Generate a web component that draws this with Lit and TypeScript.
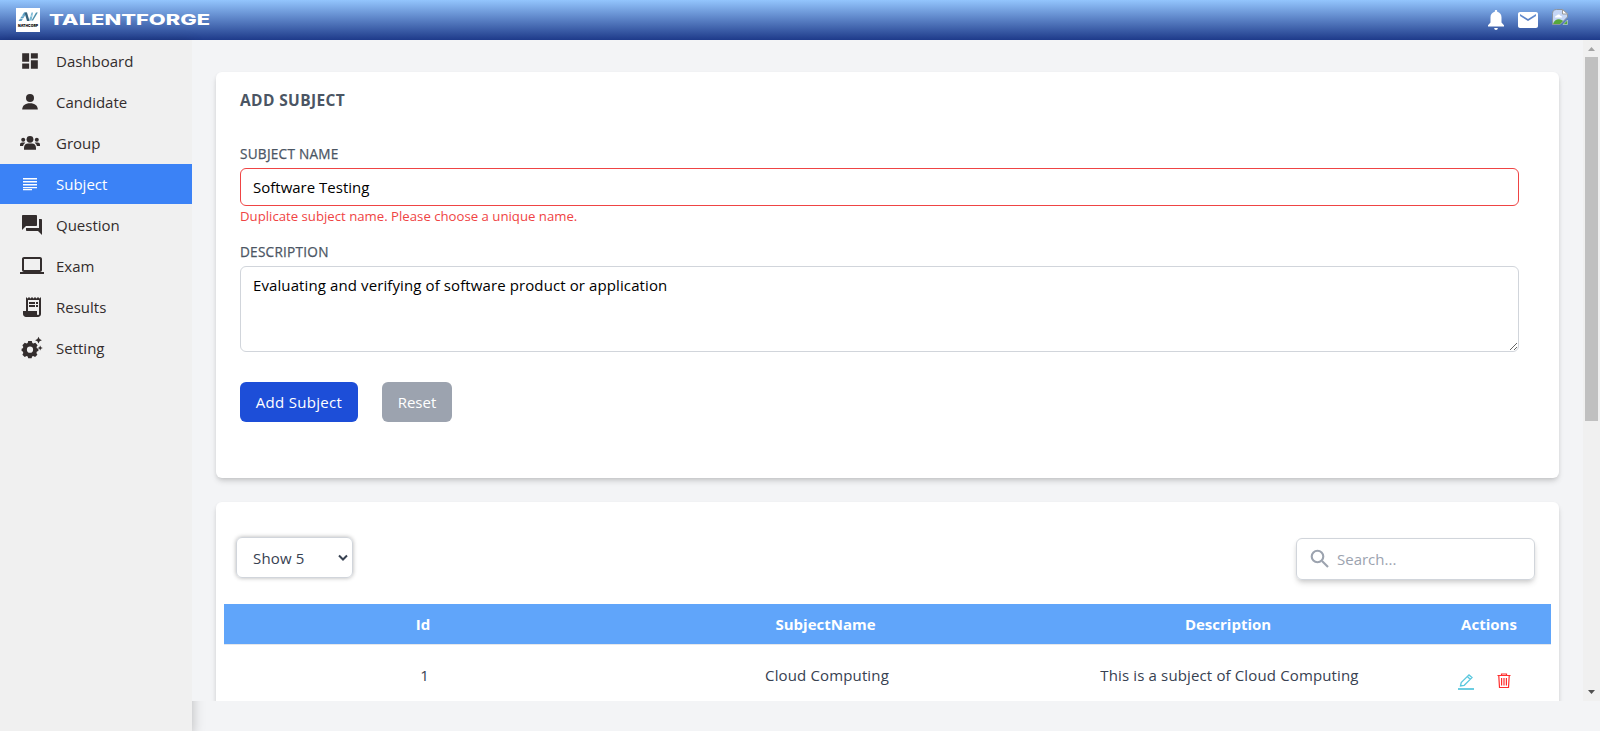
import { LitElement, html, css, svg } from "lit";
import { customElement, property } from "lit/decorators.js";

type NavItem = { id: string; label: string };

const NAV: NavItem[] = [
  { id: "dashboard", label: "Dashboard" },
  { id: "candidate", label: "Candidate" },
  { id: "group", label: "Group" },
  { id: "subject", label: "Subject" },
  { id: "question", label: "Question" },
  { id: "exam", label: "Exam" },
  { id: "results", label: "Results" },
  { id: "setting", label: "Setting" },
];

const ICONS: Record<string, { size: number; box: string; body: unknown }> = {
  dashboard: { size: 20, box: ".5 .5 23 23", body: svg`<path d="M3 13h8V3H3v10zm0 8h8v-6H3v6zm10 0h8V11h-8v10zm0-18v6h8V3h-8z"/>` },
  candidate: { size: 20, box: "0 0 20 20", body: svg`<circle cx="10" cy="6" r="4"/><path d="M2.200 17.500c0-4 3-6.300 7.800-6.300s7.800 2.300 7.800 6.300z"/>` },
  group: { size: 20, box: "0 0 20 20", body: svg`<circle cx="10" cy="6.300" r="3.400"/><circle cx="3.200" cy="6.700" r="2"/><circle cx="16.800" cy="6.700" r="2"/><path d="M4 16.800v-1.800c0-3.200 1.800-4.600 4-4.600h4c2.200 0 4 1.400 4 4.600v1.800zM0 13v-1.200c0-1.500.9-2.300 2.200-2.300h2.200c.3 0 .6.100.9.200-1.200.8-2 1.900-2.200 3.300zM20 13v-1.200c0-1.500-.9-2.300-2.200-2.300h-2.200c-.3 0-.6.100-.9.200 1.200.8 2 1.900 2.200 3.300z"/>` },
  subject: { size: 20, box: "0 0 20 20", body: svg`<path d="M3 4h14v1.600H3zM3 7h14v1.600H3zM3 10h14v1.600H3zM3 12.900h14v1.300H3zM3 15h9v1.300H3z"/>` },
  question: { size: 24, box: "0 0 24 24", body: svg`<path d="M21 6h-2v9H6v2c0 .55.45 1 1 1h11l4 4V7c0-.55-.45-1-1-1zm-4 6V3c0-.55-.45-1-1-1H3c-.55 0-1 .45-1 1v14l4-4h10c.55 0 1-.45 1-1z"/>` },
  exam: { size: 24, box: "0 0 24 24", body: svg`<path d="M20 18c1.100 0 1.990-.9 1.990-2L22 5c0-1.100-.9-2-2-2H4c-1.100 0-2 .9-2 2v11c0 1.100.9 2 2 2H0v2h24v-2h-4zM4 5h16v11H4V5z"/>` },
  results: { size: 24, box: "0 0 24 24", body: svg`<path d="M19.500 3.500 18 2l-1.500 1.500L15 2l-1.500 1.500L12 2l-1.500 1.500L9 2 7.500 3.500 6 2v14H3v3c0 1.660 1.340 3 3 3h12c1.660 0 3-1.340 3-3V2l-1.500 1.500zM19 19c0 .55-.45 1-1 1s-1-.45-1-1v-3H8V5h11v14z"/><path d="M9 7h6v2H9zM16 7h2v2h-2zM9 10h6v2H9zM16 10h2v2h-2z"/>` },
  setting: { size: 24, box: "0 0 24 24", body: svg`<path fill-rule="evenodd" d="M8.200 5h3.600l.5 2 1 .5 2-.8 2.300 2.600-1.100 1.700.4 1.300 1.500.4v2.400l-1.500.5-.5 1.300 1 1.800-2.300 2.300-2-.9-1 .5-.5 1.600H8.200l-.5-1.600-1.100-.5-1.900.9-2.300-2.300.9-1.800-.5-1.300-1.200-.5v-2.400l1.200-.4.5-1.300-.9-1.700 2.300-2.600 1.900.8 1.100-.5zM10 10.600a3.100 3.100 0 1 0 0 6.200 3.100 3.100 0 0 0 0-6.200z"/><path d="m18.500.800 1.100 2.300 2.300 1.100-2.300 1.100-1.100 2.300-1.100-2.300-2.300-1.100 2.300-1.100zM20.200 9.400l.8 1.800 1.800.8-1.800.8-.8 1.800-.8-1.800-1.800-.8 1.800-.8z"/>` },
};

@customElement("app-header")
class AppHeader extends LitElement {
  static styles = css`
    :host { display: flex; height: 40px; flex: none; align-items: center; justify-content: space-between;
      padding: 0 32px 0 16px; background: linear-gradient(to bottom, #93c5fd, #1e3a8a); }
    .brand { display: flex; align-items: center; gap: 8px; }
    .tools { display: flex; align-items: center; gap: 8px; }
    .bell { margin-right: 2px; }
    .avatar { margin: 0 0 7px 4px; }
    svg { display: block; }
    .name { font: 800 15px Inter, "Open Sans", sans-serif; fill: #fff; }
  `;
  render() {
    return html`
      <div class="brand">
        <svg width="24" height="24" viewBox="0 0 24 24">
          <rect width="24" height="24" fill="#fff"/>
          <path d="M2.500 13 8 4.500h3L5.500 13z" fill="#5b9fc4"/><path d="M8.500 4.500h2.500l2.500 8.500h-2.500z" fill="#37617b"/>
          <path d="M13 12.500l2.500-8h1.500l-1.500 8z" fill="#78b8d5"/><path d="M15.500 12.500 20 4.500h1.800L17 12.500z" fill="#4c8fab"/>
          <path d="M4.500 8h3M3.500 10.500h4M13 8h3" stroke="#fff" stroke-width=".6"/>
          <text x="2" y="18.700" textLength="20" lengthAdjust="spacingAndGlyphs" font-family="Inter, sans-serif" font-weight="900" font-size="4" fill="#111">NATHCORP</text>
        </svg>
        <svg width="164" height="24" viewBox="0 0 164 24"><text class="name" x="1" y="17.300" textLength="161" lengthAdjust="spacingAndGlyphs">TALENTFORGE</text></svg>
      </div>
      <div class="tools">
        <svg class="bell" width="20" height="24" viewBox="0 0 20 24" fill="#fff"><path d="M10 2c.8 0 1.200.5 1.200 1.200v.5c2.700.6 4.300 2.800 4.300 5.500v5.300l2.500 2.800v1.200H2v-1.200l2.500-2.800V9.200C4.500 6.500 6.100 4.300 8.800 3.700v-.5C8.800 2.500 9.200 2 10 2zM8.200 20h3.600c0 1.200-.7 2-1.800 2s-1.800-.8-1.800-2z"/></svg>
        <svg width="24" height="24" viewBox="0 0 24 24" fill="#fff"><path d="M20 4H4c-1.100 0-2 .9-2 2v12c0 1.100.9 2 2 2h16c1.100 0 2-.9 2-2V6c0-1.100-.9-2-2-2zm0 4-8 5-8-5V6l8 5 8-5v2z"/></svg>
        <svg class="avatar" width="16" height="16" viewBox="0 0 16 16">
          <path d="M.5 15.500V4.500C.5 2 2 .5 4.500.5h6l5 4.500v3L8 15.500z" fill="#c5d6f5" stroke="#8c959e"/>
          <path d="M10.500.500V5h5z" fill="#fff" stroke="#9a9a9a"/>
          <path d="M3 8.500c0-1.500 1-2 2-2 .5-1.500 3-1.300 3.300.2 1.200 0 1.700.8 1.700 1.800z" fill="#fff"/>
          <path d="M1 15c1-3.300 4-5.300 7-4.500 1.500.3 2.500 1 3 1.500l-3 3z" fill="#57a83b"/>
          <path d="M11 15.500 15.500 11v4.500z" fill="#57a83b" stroke="#dde6f5" stroke-width=".5"/>
        </svg>
      </div>`;
  }
}

@customElement("side-nav")
class SideNav extends LitElement {
  @property() active = "subject";
  static styles = css`
    :host { display: flex; flex-direction: column; gap: 1px; width: 192px; flex: none; box-sizing: border-box;
      padding-top: 1px; background: #f0f0f0; box-shadow: 0 4px 12px rgba(0,0,0,.25); }
    .item { display: flex; height: 40px; align-items: center; padding-left: 20px; color: #332d2d;
      font: 15px/24px "Open Sans", sans-serif; }
    .icon { display: flex; width: 36px; }
    .icon svg { fill: currentColor; }
    .on { background: #3b82f6; color: #fff; }
  `;
  render() {
    return NAV.map(n => {
      const i = ICONS[n.id];
      return html`<div class="item ${n.id === this.active ? "on" : ""}">
        <span class="icon"><svg width=${i.size} height=${i.size} viewBox=${i.box}>${i.body}</svg></span>${n.label}</div>`;
    });
  }
}

@customElement("subject-form")
class SubjectForm extends LitElement {
  static styles = css`
    :host { display: flex; flex-direction: column; box-sizing: border-box; height: 406px; flex: none; padding: 16px 40px 0 24px;
      background: #fff; border-radius: 6px; box-shadow: 0 4px 6px -1px rgba(0,0,0,.14), 0 2px 4px -1px rgba(0,0,0,.1);
      font: 15px/24px "Open Sans", sans-serif; }
    h2 { margin: 0 0 32px; font: 700 15.500px/24px "Open Sans", sans-serif; color: #4b5563; letter-spacing: .38px; }
    label { font: 500 13.600px/20px "Open Sans", sans-serif; color: #4b5563; margin-bottom: 4px; letter-spacing: .25px;
      -webkit-text-stroke: .25px #4b5563; }
    input, textarea { box-sizing: border-box; width: 100%; margin: 0; border: 1px solid #d1d5db; border-radius: 6px;
      padding: 7px 12px; font: 15px/22px "Open Sans", sans-serif; color: #000; background: #fff; outline: none; }
    input { height: 38px; border-color: #ef4444; }
    textarea { height: 86px; display: block; letter-spacing: .105px; }
    .error { font-size: 13.200px; line-height: 20px; color: #ef4444; margin-bottom: 16px; }
    .actions { display: flex; gap: 24px; margin-top: 30px; }
    button { height: 40px; border: 0; border-radius: 6px; padding: 0; color: #fff; font: 15px/24px "Open Sans", sans-serif; }
    .add { background: #1d4ed8; width: 118px; letter-spacing: .3px; }
    .reset { background: #9ca3af; width: 70px; }
  `;
  render() {
    return html`
      <h2>ADD SUBJECT</h2>
      <label>SUBJECT NAME</label>
      <input .value=${"Software Testing"} />
      <div class="error">Duplicate subject name. Please choose a unique name.</div>
      <label>DESCRIPTION</label>
      <textarea .value=${"Evaluating and verifying of software product or application"}></textarea>
      <div class="actions"><button class="add">Add Subject</button><button class="reset">Reset</button></div>`;
  }
}

@customElement("subject-table")
class SubjectTable extends LitElement {
  static styles = css`
    :host { display: block; box-sizing: border-box; flex: none; height: 420px; padding: 35px 8px 0; background: #fff;
      border-radius: 6px; box-shadow: 0 4px 6px -1px rgba(0,0,0,.14), 0 2px 4px -1px rgba(0,0,0,.1);
      font: 15px/24px "Open Sans", sans-serif; color: #374151; }
    .bar { display: flex; justify-content: space-between; padding: 0 16px 0 12px; height: 67px; align-items: flex-start; }
    .show { display: flex; align-items: center; justify-content: space-between; box-sizing: border-box; width: 117px; height: 41px;
      padding: 0 3px 0 16px; border: 1px solid #d1d5db; border-radius: 6px; box-shadow: 0 0 4px rgba(0,0,0,.3); letter-spacing: .15px; }
    .search { display: flex; align-items: center; gap: 7px; box-sizing: border-box; width: 239px; height: 42px; margin-top: 1px;
      padding-left: 13px; border: 1px solid #d1d5db; border-radius: 6px; color: #9ca3af; box-shadow: 0 4px 6px -1px rgba(0,0,0,.14), 0 2px 4px -1px rgba(0,0,0,.1); }
    .row { display: grid; grid-template-columns: 398px 407px 398px 124px; text-align: center; }
    .head { background: #60a5fa; color: #fff; font-weight: 700; height: 40px; line-height: 40px; border-bottom: 1px solid #e5e7eb; font-size: 15px; }
    .body { line-height: 60px; letter-spacing: .14px; }
    .body span { padding-left: 3px; }
    .icons { display: flex; justify-content: center; gap: 22px; }
    .body .icons { padding: 28px 8px 0 0; }
  `;
  render() {
    return html`
      <div class="bar">
        <div class="show">Show 5<svg width="12" height="10" viewBox="0 0 12 10"><path d="m2 2.500 4 4 4-4" fill="none" stroke="#374151" stroke-width="2"/></svg></div>
        <div class="search"><svg width="20" height="20" viewBox="0 0 20 20" fill="none" stroke="#9ca3af" stroke-width="2.100"><circle cx="7.500" cy="7.500" r="5.800"/><path d="m12 12 6 6"/></svg>Search...</div>
      </div>
      <div class="row head"><span>Id</span><span>SubjectName</span><span>Description</span><span>Actions</span></div>
      <div class="row body"><span>1</span><span>Cloud Computing</span><span>This is a subject of Cloud Computing</span>
        <span class="icons">
          <svg width="16" height="18" viewBox="0 0 16 18" fill="none" stroke="#5bc8de" stroke-width="1.300"><path d="M2.500 13 3.200 9.600 11 1.900 14 4.600 6.200 12.300zM9.300 3.600l2.900 2.700"/><path d="M0 16h16" stroke-width="1.800"/></svg>
          <svg width="16" height="16" viewBox="0 0 16 16" fill="none" stroke="#ff2d2d" stroke-width="1.200"><path d="M1.500 2.500h13M5.500 2V1h5v1M2.800 3l.7 11.500h9L13.200 3M5.600 5v7.500M8 5v7.500M10.400 5v7.500"/></svg>
        </span></div>`;
  }
}

@customElement("scroll-rail")
class ScrollRail extends LitElement {
  static styles = css`
    :host { display: flex; flex-direction: column; width: 17px; flex: none; background: #f0f0f0; align-items: center; }
    .cap { height: 17px; flex: none; }
    .thumb { height: 364px; width: 13px; background: #c0c0c0; }
    .rest { flex: 1; }
    svg { display: block; }
  `;
  render() {
    return html`
      <svg class="cap" width="17" height="17"><path d="m5 11 3.500-4L12 11z" fill="#a3a3a3"/></svg>
      <div class="thumb"></div><div class="rest"></div>
      <svg class="cap" width="17" height="17"><path d="m5 6 3.500 4L12 6z" fill="#505050"/></svg>`;
  }
}

@customElement("app-root")
class AppRoot extends LitElement {
  static styles = css`
    :host { display: flex; flex-direction: column; height: 731px; overflow: hidden; background: #f3f4f6; }
    .shell { display: flex; flex: 1; min-height: 0; }
    .main { display: flex; flex: 1; height: 661px; overflow: hidden; z-index: 1; background: #f3f4f6; }
    .content { display: flex; flex: 1; min-width: 0; flex-direction: column; gap: 24px; padding: 32px 24px 0; }
  `;
  render() {
    return html`
      <app-header></app-header>
      <div class="shell">
        <side-nav></side-nav>
        <div class="main">
          <div class="content"><subject-form></subject-form><subject-table></subject-table></div>
          <scroll-rail></scroll-rail>
        </div>
      </div>`;
  }
}
